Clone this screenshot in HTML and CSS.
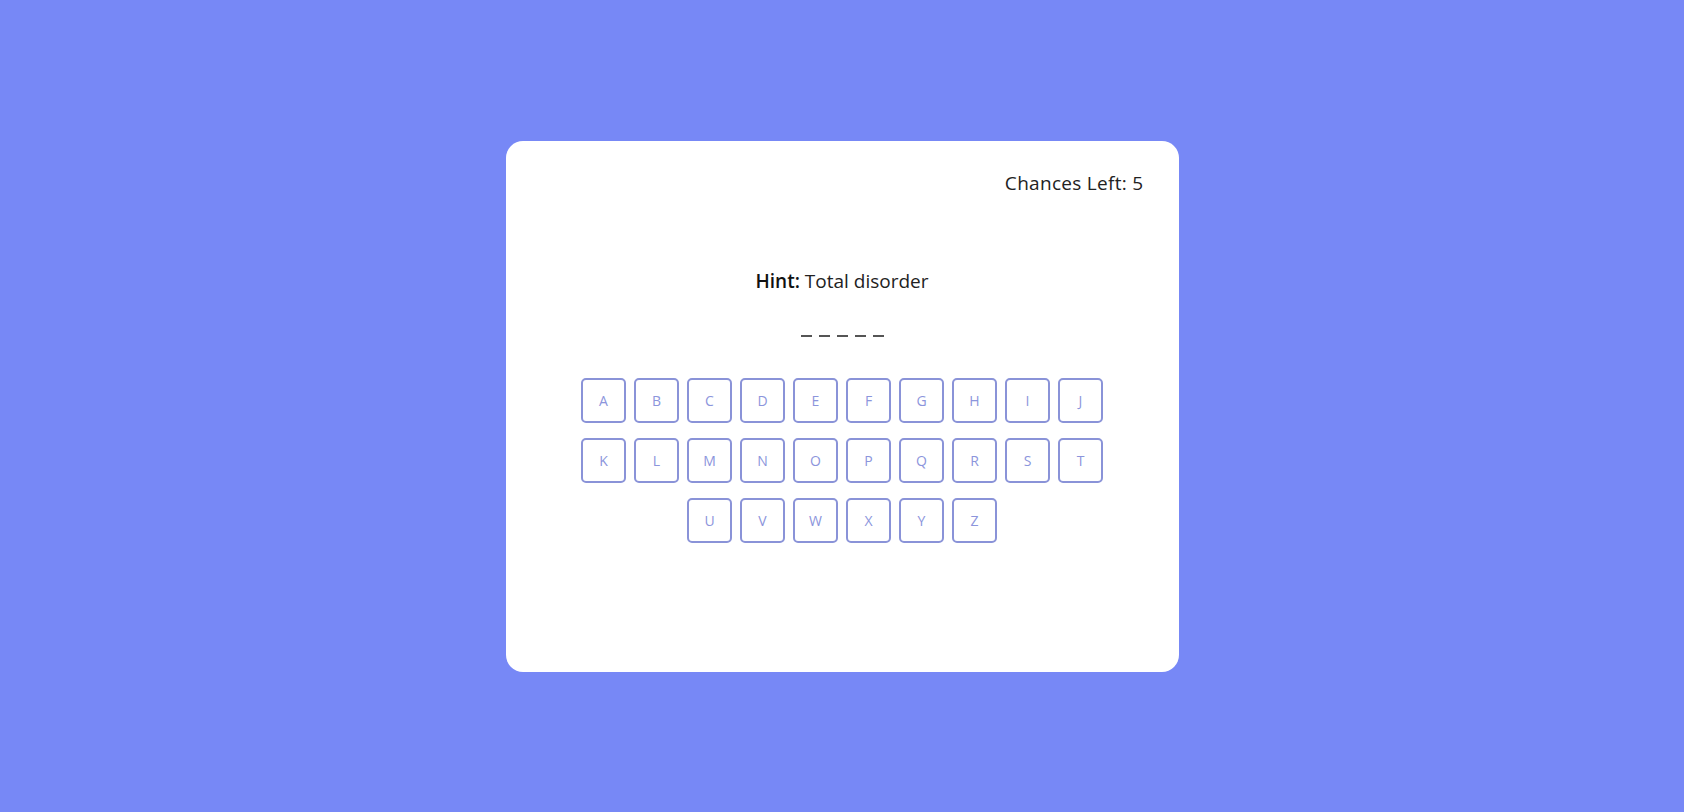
FILE: index.html
```html
<!DOCTYPE html>
<html lang="en">
<head>
<meta charset="utf-8">
<title>Hangman</title>
<link rel="stylesheet" href="styles.css">
</head>
<body>
<main class="page">
  <section class="card">
    <div class="chances">Chances Left: <span>5</span></div>
    <p class="hint"><b>Hint:</b> Total disorder</p>
    <div class="word">
      <span class="blank"></span><span class="blank"></span><span class="blank"></span><span class="blank"></span><span class="blank"></span>
    </div>
    <div class="keys">
      <button class="key">A</button><button class="key">B</button><button class="key">C</button><button class="key">D</button><button class="key">E</button><button class="key">F</button><button class="key">G</button><button class="key">H</button><button class="key">I</button><button class="key">J</button>
      <button class="key">K</button><button class="key">L</button><button class="key">M</button><button class="key">N</button><button class="key">O</button><button class="key">P</button><button class="key">Q</button><button class="key">R</button><button class="key">S</button><button class="key">T</button>
      <button class="key">U</button><button class="key">V</button><button class="key">W</button><button class="key">X</button><button class="key">Y</button><button class="key">Z</button>
    </div>
  </section>
</main>
</body>
</html>
```

FILE: styles.css
```css
* { box-sizing: border-box; }
html, body { margin: 0; padding: 0; }
body {
  background: #7788f6;
  font-family: "Open Sans", "Noto Sans", sans-serif;
  color: #222;
}
.page {
  min-height: 812px;
  display: flex;
  justify-content: center;
  padding-top: 141px;
}
.card {
  width: 673px;
  height: 531px;
  background: #fff;
  border-radius: 17px;
  padding: 27px 35px 0 35px;
  display: flex;
  flex-direction: column;
  align-items: center;
}
.chances {
  align-self: flex-end;
  font-size: 19px;
  line-height: 30px;
  letter-spacing: 0.3px;
  color: #222;
}
.hint {
  margin: 68px 0 0;
  font-size: 19px;
  line-height: 30px;
  color: #222;
}
.hint b { font-weight: 600; color: #111; }
.word {
  margin-top: 39px;
  display: flex;
  gap: 7px;
  height: 2px;
}
.blank {
  width: 11px;
  height: 2px;
  background: #555;
}
.keys {
  margin-top: 41px;
  width: 522px;
  display: flex;
  flex-wrap: wrap;
  justify-content: center;
  column-gap: 8px;
  row-gap: 15px;
}
.key {
  width: 45px;
  height: 45px;
  border: 2px solid #8a93d8;
  border-radius: 5px;
  background: #fff;
  color: #8c95dc;
  font-family: "Open Sans", "Noto Sans", sans-serif;
  font-size: 14px;
  padding: 0;
  display: flex;
  align-items: center;
  justify-content: center;
}
```
